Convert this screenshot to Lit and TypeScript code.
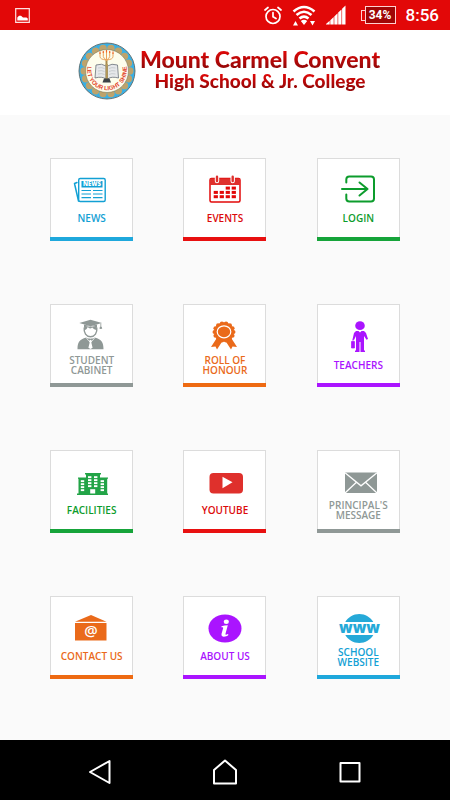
import { LitElement, html, svg, css, type TemplateResult } from "lit";
import { customElement, property } from "lit/decorators.js";

type Tone = "blue" | "red" | "green" | "grey" | "orange" | "purple";

interface Entry {
  title: string;
  tone: Tone;
  low?: boolean;
  art: TemplateResult;
}

const range = (n: number) => Array.from({ length: n }, (_, i) => i);

const news = svg`
  <path d="M15 9.500l-2.500 1 4 17.500" fill="none" stroke="currentColor" stroke-width="1.500" stroke-linejoin="round" stroke-linecap="round"/>
  <rect x="16.700" y="5.500" width="26.500" height="23" rx="1.500" fill="#fff" stroke="currentColor" stroke-width="1.400"/>
  <rect x="19.500" y="8" width="21" height="6.500" fill="currentColor"/>
  <text x="30" y="13.200" class="tiny">NEWS</text>
  <path d="M19.500 17.500H29M31 17.500h9.500M19.500 21H29M31 21h9.500M19.500 24.700H29M31 24.700h9.500" stroke="currentColor" stroke-width="1.200"/>`;

const calendarCells = [[2, 0], [3, 0], [0, 1], [1, 1], [2, 1], [3, 1], [0, 2], [1, 2], [2, 2], [3, 2]];
const events = svg`
  <rect x="15" y="5.500" width="30" height="23.500" rx="1.500" fill="#fff" stroke="#e20808" stroke-width="1.500"/>
  <path d="M15 5.500h30v6.500H15z" fill="#df302c"/>
  <path d="M22 3.500v4.500M37.700 3.500v4.500" stroke="#fff" stroke-width="4.400" stroke-linecap="round"/>
  <path d="M22 3.700v4.300M37.700 3.700v4.300" stroke="#df302c" stroke-width="2.400" stroke-linecap="round"/>
  ${calendarCells.map(([c, r]) => svg`<rect x=${18.7 + c * 6} y=${13.6 + r * 4.3} width="4.200" height="3" fill="#e20808"/>`)}`;

const login = svg`
  <path d="M18.300 9.500V6.500a3 3 0 0 1 3-3H43a3 3 0 0 1 3 3v19a3 3 0 0 1-3 3H21.300a3 3 0 0 1-3-3v-4M14 16h25.500M31.500 9.500l8 6.500-8 6.500" fill="none" stroke="currentColor" stroke-width="2" stroke-linecap="round" stroke-linejoin="round"/>`;

const student = svg`
  <path d="M28.500 .8L40 4 28.500 7.300 17.300 4z" fill="currentColor"/>
  <path d="M22 5.500v3.200c3.500-2.200 9.500-2.200 13 0V5.500l-6.500 1.800z" fill="currentColor"/>
  <path d="M38.800 4.500v5M38.300 8l-.4 1.500h1.800L39.300 8z" stroke="currentColor" stroke-width=".8" fill="currentColor"/>
  <path d="M22.200 8.500c-.6 5.500 2 9.300 6.300 9.300s6.900-3.800 6.300-9.300" fill="none" stroke="currentColor" stroke-width="1.400"/>
  <path d="M22.200 11.300c2.200-.4 3-1.800 3.500-3.200 1.500 1.700 3 1.600 4.500.4 1.500 1.500 2.500 2.200 4.600 2.500l-.2-3.500H22.300z" fill="currentColor"/>
  <path d="M15.500 30.300c0-7.300 1.800-9.800 8.700-11.800 2.300 1.600 6.300 1.600 8.600 0 6.900 2 8.700 4.500 8.700 11.800z" fill="currentColor"/>
  <path d="M28.500 20.700l-1.700 1.300.9 1.600-1.300 5.200 2.100 1.200 2.100-1.200-1.300-5.200.9-1.600z" fill="#fff"/>
  <path d="M24 18.400l2.800 3.600M33 18.400L30.200 22" stroke="#fff" stroke-width=".7"/>`;

const award = svg`
  <path d="M21.500 19.500L16 28l4.500-.5 1.500 3 5.500-8.500h3l5.500 8.500 1.500-3 4.500.5-5.500-8.500z" fill="currentColor"/>
  <circle cx="29" cy="13" r="9.800" fill="currentColor"/>
  ${range(14).map((i) => {
    const a = (i * Math.PI) / 7;
    return svg`<circle cx=${29 + 9.4 * Math.cos(a)} cy=${13 + 8.6 * Math.sin(a)} r="2.100" fill="currentColor"/>`;
  })}
  <ellipse cx="29" cy="12.800" rx="6.800" ry="6" fill="none" stroke="#fff" stroke-width="1.200"/>`;

const teacher = svg`
  <ellipse cx="32" cy="6.700" rx="4.800" ry="4.400" fill="currentColor"/>
  <path d="M28 12h2.500l1.500 1.500 1.500-1.500H36l2 2 2 6-1.500.7L36 17v14.500h1V33h-4.500V23h-1v10H27v-1.500h1V17l-2 4-1.500-.5L26 14z" fill="currentColor"/>
  <path d="M23.500 22.500h3v6.500h-3zM25 20v2.500" fill="currentColor" stroke="currentColor" stroke-width=".7"/>`;

const windows = [
  ...range(4).flatMap((r) => [[18.8, 15.2 + r * 3], [38.6, 15.2 + r * 3]]),
  ...range(4).flatMap((r) => [[26, 11.2 + r * 3], [32, 11.2 + r * 3]]),
];
const building = svg`
  <path d="M16 12.500h8v-3h-1V8h16v1.500h-1v3h8v1.200h-.8V28.500H46V30H15v-1.500h1.500V13.700H16z" fill="#22a447"/>
  ${windows.map(([x, y]) => svg`<rect x=${x} y=${y} width="3.400" height="1.900" fill="#fff"/>`)}
  <rect x="28.200" y="24.200" width="5" height="4.300" fill="#fff"/>`;

const youtube = svg`
  <rect x="14.500" y="8" width="33.500" height="20.500" rx="4" fill="#df302c"/>
  <path d="M27.500 11.800l10 5.500-10 6z" fill="#fff"/>`;

const envelope = svg`
  <path d="M17 7.500h32v20.500H17z" fill="currentColor"/>
  <path d="M17 7.800l16 13 16-13M17 28l11.700-11M49 28L37.300 17" fill="none" stroke="#fff" stroke-width="1.300"/>`;

const contact = svg`
  <path d="M29 4l15.500 6.700H13z" fill="currentColor"/>
  <path d="M13 12h31.500v17.500H13z" fill="currentColor"/>
  <text x="29" y="25" class="at">@</text>`;

const info = svg`
  <ellipse cx="30" cy="17.500" rx="16.500" ry="14" fill="currentColor"/>
  <ellipse cx="31.300" cy="10.800" rx="2.600" ry="2.200" fill="#fff"/>
  <path d="M26.500 15.300c2-.7 4-1 6.300-1l-2.300 8.500c-.3 1.200.5 1.300 2.500.2l.4.900c-2 1.900-7.500 3-6.900-.8l1.600-5.800c.2-.9-.3-1.100-1.700-1z" fill="#fff"/>`;

const web = svg`
  <path d="M17.300 11c2.700-4.600 8-8 14-8s11.300 3.400 14 8zM17.300 24c2.700 4.600 8 8 14 8s11.300-3.400 14-8z" fill="#25a9d8"/>
  <text x="31.500" y="21.500" class="www">www</text>`;

const entries: Entry[] = [
  { title: "NEWS", tone: "blue", art: news },
  { title: "EVENTS", tone: "red", art: events },
  { title: "LOGIN", tone: "green", art: login },
  { title: "STUDENT\nCABINET", tone: "grey", low: true, art: student },
  { title: "ROLL OF\nHONOUR", tone: "orange", low: true, art: award },
  { title: "TEACHERS", tone: "purple", low: true, art: teacher },
  { title: "FACILITIES", tone: "green", art: building },
  { title: "YOUTUBE", tone: "red", art: youtube },
  { title: "PRINCIPAL'S\nMESSAGE", tone: "grey", art: envelope },
  { title: "CONTACT US", tone: "orange", art: contact },
  { title: "ABOUT US", tone: "purple", art: info },
  { title: "SCHOOL\nWEBSITE", tone: "blue", low: true, art: web },
];

@customElement("menu-tile")
class MenuTile extends LitElement {
  @property({ attribute: false }) entry!: Entry;

  static styles = css`
    :host { display: block; }
    .tile {
      display: flex; flex-direction: column; align-items: center;
      width: 83px; height: 83px; padding: 15px 0 0; border: 0;
      background: #fff; box-shadow: inset 0 0 0 1px #dcdcdc;
      font: 600 10px/10px "Open Sans", sans-serif; cursor: pointer;
    }
    .icon { display: block; width: 60px; height: 36px; flex: none; overflow: visible; }
    .label {
      display: grid; align-content: center; height: 18px;
      text-align: center; white-space: pre;
    }
    .low { height: 20px; }
    .bar { width: 100%; height: 4px; margin-top: auto; background: var(--bar); }
    .blue { color: #12a0d4; --bar: #1fa8dc; }
    .red { color: #dc0b0b; --bar: #e81010; }
    .green { color: #0c9c2c; --bar: #16a43a; }
    .grey { color: #8f9896; --bar: #8f9896; }
    .orange { color: #ea6a1a; --bar: #ee6a12; }
    .purple { color: #aa14ff; --bar: #aa14ff; }
    text { text-anchor: middle; font-family: "Open Sans", sans-serif; }
    .tiny { font-size: 6px; font-weight: 800; fill: #fff; }
    .at { font-size: 15px; font-weight: 600; fill: #fff; }
    .www { font-size: 15px; font-weight: 800; fill: #25a9d8; }
  `;

  render() {
    const { title, tone, low, art } = this.entry;
    return html`<button class="tile ${tone}">
      <svg class="icon" viewBox="0 0 60 36" aria-hidden="true">${art}</svg>
      <span class="label ${low ? "low" : ""}">${title}</span>
      <span class="bar"></span>
    </button>`;
  }
}

@customElement("school-crest")
class SchoolCrest extends LitElement {
  static styles = css`
    :host { display: block; flex: none; }
    svg { display: block; width: 58px; height: 58px; }
    .motto { font: 700 6px "Liberation Sans", sans-serif; fill: #e2452c; text-anchor: middle; }
  `;

  render() {
    return html`<svg viewBox="0 0 58 58" role="img" aria-label="School crest">
      <circle cx="29" cy="29" r="28" fill="#38b0e6" stroke="#5c6a6a" stroke-width=".9"/>
      ${range(18).map((i) => {
        const a = (i * Math.PI) / 9;
        return svg`<circle cx=${29 + 22.8 * Math.cos(a)} cy=${29 + 22.8 * Math.sin(a)} r="3.700" fill="#bda36c"/>`;
      })}
      <circle cx="29" cy="29" r="21.500" fill="#fdfdec" stroke="#807a5a" stroke-width=".6"/>
      <path d="M28.500 18v17" stroke="#a88a4c" stroke-width="2"/>
      <path d="M22 11v3.500q0 3 6.500 3.500 6.500-.5 6.500-3.500V11M25.300 10v4.500q.5 2.500 3.200 3.500 2.700-1 3.200-3.500V10M28.500 9v10" fill="none" stroke="#e8a35c" stroke-width="1"/>
      <path d="M22 9.500v2.500M25.300 9v2M28.500 8v2.500M31.700 9v2M35 9.500v2.500" stroke="#f06a2c" stroke-width="1.200"/>
      <path d="M18 23q6-2 10 1v13q-4-3-11-1z" fill="#e6e8ea" stroke="#687078" stroke-width=".8"/>
      <path d="M39.500 23q-6-2-10 1v13q4-3 11-1z" fill="#e6e8ea" stroke="#687078" stroke-width=".8"/>
      <path d="M20 26q4-1 6.500.5M20 29q4-1 6.500.5M20 32q4-1 6.500.5M37.500 26q-4-1-6.500.5M37.500 29q-4-1-6.500.5M37.500 32q-4-1-6.500.5" fill="none" stroke="#b4babd" stroke-width=".6"/>
      <path d="M28.700 22v15" stroke="#b39858" stroke-width="2.200"/>
      <path d="M26 36.500h5.500l1.500 4h-8.500z" fill="#3c4246"/>
      <path id="motto" d="M9.500 25a19.800 19.800 0 1 0 39 0" fill="none"/>
      <text class="motto"><textPath href="#motto" startOffset="50%">LET YOUR LIGHT SHINE</textPath></text>
    </svg>`;
  }
}

@customElement("app-root")
class AppRoot extends LitElement {
  static styles = css`
    :host {
      display: flex; flex-direction: column; min-height: 100vh;
      background: #fafafa; font-family: Roboto, sans-serif;
    }
    svg { display: block; flex: none; }
    .status {
      display: flex; align-items: center; height: 30px; padding: 0 11px 0 15px;
      background: #e20808; color: #fff; box-sizing: border-box;
    }
    .right { display: flex; align-items: center; gap: 10px; margin-left: auto; }
    .power { display: flex; align-items: center; margin-left: 5px; }
    .cap { width: 3px; height: 9px; border: 1px solid #ffd0d0; border-right: 0; }
    .charge {
      width: 31px; height: 18px; box-sizing: border-box; border: 1px solid #ffd0d0;
      background: #a00606; font-size: 12px; line-height: 16px; font-weight: 700; text-align: center;
    }
    .time { font-size: 17px; line-height: 20px; font-weight: 500; }
    .brand {
      display: flex; align-items: center; justify-content: center; gap: 4px;
      height: 85px; padding: 0 0 4px 8px; box-sizing: border-box; background: #fff;
    }
    .name { margin: 0; padding-bottom: 4px; text-align: center; font-family: Lato, sans-serif; font-weight: 900; white-space: nowrap; }
    .name span {
      display: block; color: transparent;
      background: linear-gradient(#dc0808 20%, #960808 85%);
      -webkit-background-clip: text; background-clip: text;
    }
    .first { font-size: 23px; line-height: 24px; }
    .second { font-size: 19px; line-height: 20px; }
    .menu {
      flex: 1; display: grid; grid-template-columns: repeat(3, 1fr); justify-items: center;
      align-content: start; row-gap: 63px; padding: 43px 25px;
    }
    .keys {
      display: grid; grid-template-columns: repeat(3, 1fr); height: 60px;
      padding: 4px 37px 0; box-sizing: border-box; background: #000;
    }
    .key { display: grid; place-items: center; padding: 0; border: 0; background: none; cursor: pointer; }
    .key svg { fill: none; stroke: #fff; stroke-width: 2; stroke-linejoin: round; }
  `;

  render() {
    return html`
      <div class="status">
        <svg width="15" height="15" viewBox="0 0 15 15"><path d="M.7.700h13.600v13.600H.7z" fill="none" stroke="#ffe0e0" stroke-width="1.200"/><path d="M2.300 12.500V9.500L4 7.800h2l2 1.700h3.500l1.300 1v2z" fill="#fff"/></svg>
        <div class="right">
          <svg width="18" height="19" viewBox="0 0 18 19" fill="none" stroke="#fff" stroke-width="1.700" stroke-linecap="round"><circle cx="9" cy="10.500" r="7"/><path d="M9 6.500v4.300l3 1.800M1 4l3-2.500M17 4l-3-2.500"/></svg>
          <svg width="24" height="21" viewBox="0 0 24 21"><path d="M1.500 6.500Q12-2.500 22.500 6.500M4.500 10Q12 3.500 19.500 10M7.500 13.500q4.500-3.700 9 0" fill="none" stroke="#fff" stroke-width="2.600"/><path d="M8.800 16q3.200-2.400 6.400 0L12 20zM1 20.500l2.500-4.500L6 20.500zM18 16h5l-2.500 4.500z" fill="#fff"/></svg>
          <svg width="20" height="20" viewBox="0 0 20 20" fill="#fff"><path d="M0 19.500V19l3.700-3.300v3.800zM4.300 15.200l3.400-3.200v7.500H4.300zM8.300 11.400l3.300-3.200v11.300H8.300zM12.200 7.600l3.300-3.200v15.100h-3.300zM16.100 3.800L19.500.5v19h-3.400z"/></svg>
          <div class="power"><span class="cap"></span><span class="charge">34%</span></div>
          <span class="time">8:56</span>
        </div>
      </div>
      <header class="brand">
        <school-crest></school-crest>
        <h1 class="name"><span class="first">Mount Carmel Convent</span><span class="second">High School &amp; Jr. College</span></h1>
      </header>
      <main class="menu">${entries.map((e) => html`<menu-tile .entry=${e}></menu-tile>`)}</main>
      <nav class="keys">
        <button class="key" aria-label="Back"><svg width="28" height="28" viewBox="0 0 28 28"><path d="M23.500 3v22L4 14z"/></svg></button>
        <button class="key" aria-label="Home"><svg width="28" height="28" viewBox="0 0 28 28"><path d="M3 25.500V12L14 2.500 25 12v13.500z"/></svg></button>
        <button class="key" aria-label="Recent apps"><svg width="28" height="28" viewBox="0 0 28 28"><path d="M4.500 5h19v18.500h-19z"/></svg></button>
      </nav>`;
  }
}
